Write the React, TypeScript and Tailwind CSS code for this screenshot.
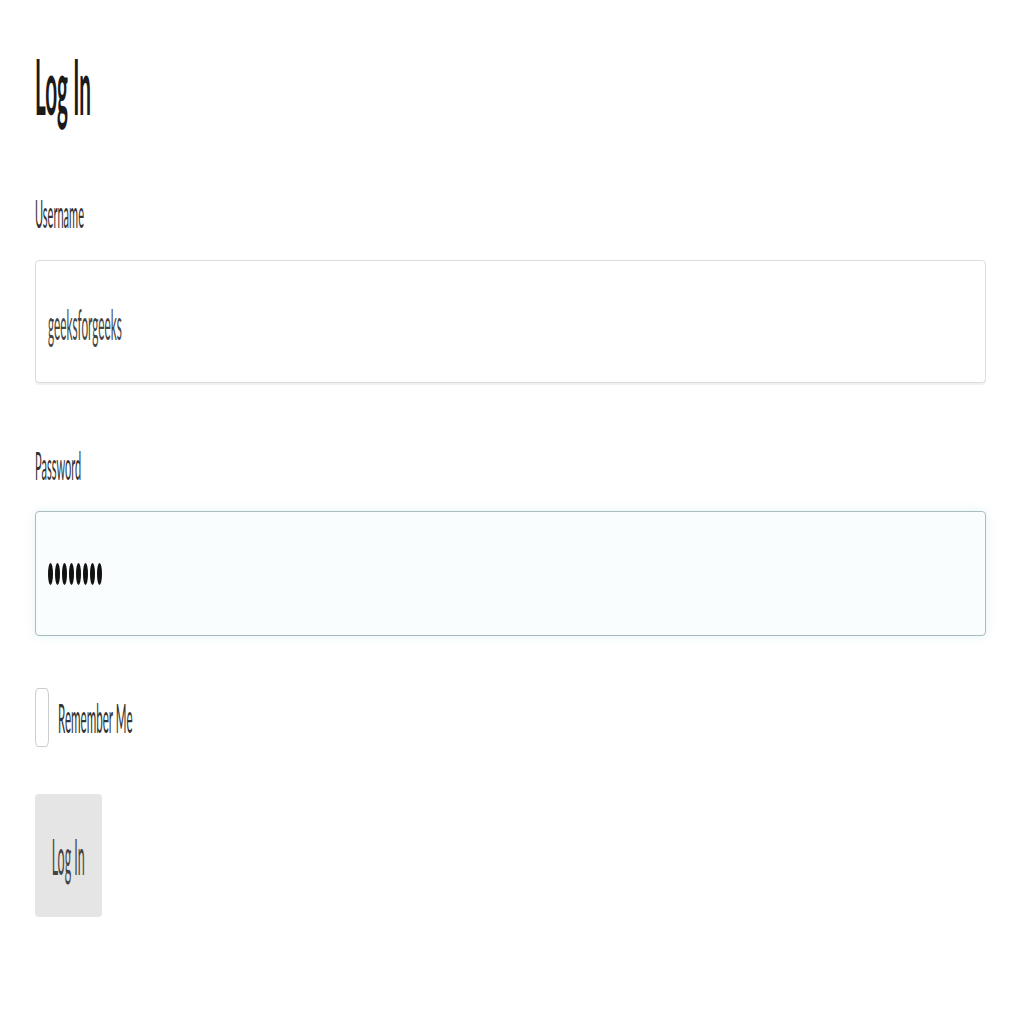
import React from "react";

const squeeze = "inline-block origin-left scale-x-[0.29] whitespace-nowrap";

function Label({ children }: { children: React.ReactNode }) {
  return (
    <div className="h-[38px] text-[38px] leading-none text-[#333]">
      <span className={squeeze}>{children}</span>
    </div>
  );
}

export default function App() {
  return (
    <div className="min-h-[1024px] w-full bg-white px-[35px] font-['Lato',sans-serif]">
      <div className="w-[951px] pt-[47px]">
        {/* Heading */}
        <h1 className="h-[77px] text-[77px] leading-none font-bold text-[#1a1a1a]">
          <span className="inline-block origin-left scale-x-[0.27] whitespace-nowrap">Log In</span>
        </h1>

        {/* Username */}
        <div className="mt-[70px]">
          <Label>Username</Label>
        </div>
        <div className="mt-[28px] flex h-[123px] items-center rounded-[4px] border border-[#dcdcdc] bg-white px-[12px] shadow-[0_2px_1px_rgba(0,0,0,0.06)]">
          <div className="pt-[4px] text-[42px] leading-none text-[#444]">
            <span className="inline-block origin-left scale-x-[0.28] whitespace-nowrap">geeksforgeeks</span>
          </div>
        </div>

        {/* Password */}
        <div className="mt-[63px]">
          <Label>Password</Label>
        </div>
        <div className="mt-[27px] flex h-[125px] items-center gap-[2px] rounded-[4px] border border-[#a9bcbf] bg-[#fafdfe] px-[12px] shadow-[0_0_10px_rgba(140,210,225,0.25)]">
          {Array.from({ length: 8 }).map((_, i) => (
            <span key={i} className="h-[22px] w-[5px] rounded-[50%] bg-[#111]" />
          ))}
        </div>

        {/* Remember me */}
        <div className="mt-[52px] flex h-[59px] items-center gap-[9px]">
          <span className="h-[59px] w-[14px] rounded-[3px/8px] border border-[#cccccc] bg-white" />
          <div className="text-[40px] leading-none text-[#333]">
            <span className={squeeze}>Remember Me</span>
          </div>
        </div>

        {/* Submit */}
        <button className="mt-[47px] flex h-[123px] w-[67px] items-center justify-center rounded-[4px] bg-[#e5e5e5] text-[50px] leading-none text-[#444]">
          <span className="inline-block origin-center scale-x-[0.25] whitespace-nowrap">Log In</span>
        </button>
      </div>
    </div>
  );
}
